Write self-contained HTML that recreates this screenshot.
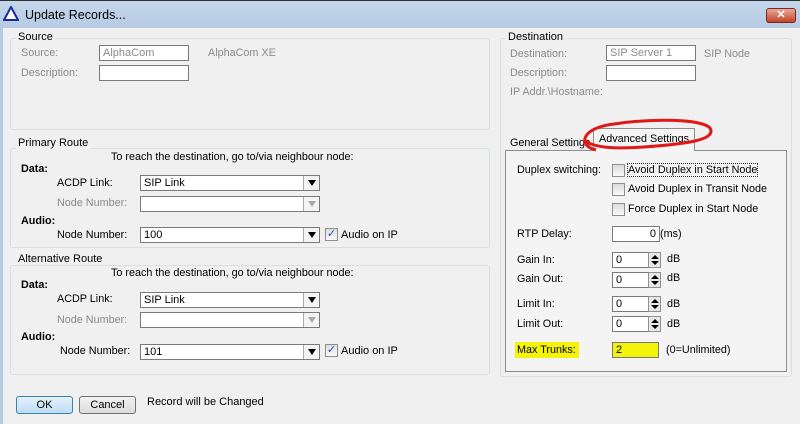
<!DOCTYPE html>
<html><head><style>
*{box-sizing:border-box;margin:0;padding:0}
body{width:800px;height:424px;overflow:hidden;background:#f0f0f0;font-family:"Liberation Sans",sans-serif;font-size:10.8px;color:#000;position:relative}
.a{position:absolute;white-space:nowrap}
.g{color:#8a8a8a}
.grp{position:absolute;border:1px solid #d5dfe5;border-radius:3px}
.gt{position:absolute;background:#f0f0f0;padding:0 2px;font-size:11px}
.in{position:absolute;background:#fff;border:1px solid #7a7a7a;height:16px;padding:1px 3px;font-size:11px}
.cb{position:absolute;background:#fff;border:1px solid #7a7a7a;height:16px;font-size:11px}
.cb span{position:absolute;left:3px;top:1px}
.cb i{position:absolute;right:0;top:0;width:16px;height:14px;border-left:1px solid #aaa;background:#f4f4f4}
.cb i:after{content:"";position:absolute;left:4px;top:4px;border-left:4px solid transparent;border-right:4px solid transparent;border-top:6px solid #000}
.cb.d i:after{border-top-color:#aaa}
.ck{position:absolute;width:13px;height:13px;border:1px solid #8f8f8f;background:linear-gradient(#dcdcdc,#fafafa)}
.sp{position:absolute;width:13px;height:16px;border:1px solid #8f8f8f;background:#e8e8e8}
.sp:before{content:"";position:absolute;left:2px;top:2px;border-left:4px solid transparent;border-right:4px solid transparent;border-bottom:4px solid #000}
.sp:after{content:"";position:absolute;left:2px;top:8px;border-left:4px solid transparent;border-right:4px solid transparent;border-top:4px solid #000}
.btn{position:absolute;height:18px;border:1px solid #707070;border-radius:3px;background:linear-gradient(#f2f2f2,#dcdcdc);text-align:center;line-height:16px;font-size:11px}
b{font-weight:bold}
</style></head><body>
<div class="a" style="left:0;top:0;width:800px;height:28px;background:linear-gradient(#c4d6ea,#b6cbe3);border-top:1px solid #333"></div>
<div class="a" style="left:0;top:28px;width:3px;height:396px;background:#b6cbe3"></div>
<svg class="a" style="left:3px;top:6px" width="16" height="15"><polygon points="8,1 15,14 1,14" fill="#fff" stroke="#1a2a9a" stroke-width="2"/></svg>
<div class="a" style="left:25px;top:8px;font-size:12.5px">Update Records...</div>
<div class="a" style="left:766px;top:8px;width:30px;height:15px;border:1px solid #7a2a1a;border-radius:3px;background:linear-gradient(#e8a898,#c4442a);color:#fff;text-align:center;font-weight:bold;font-size:11px;line-height:13px">✕</div>

<div class="grp" style="left:10px;top:38px;width:480px;height:92px"></div>
<div class="gt" style="left:16px;top:31px">Source</div>
<div class="a g" style="left:21px;top:47px">Source:</div>
<div class="in g" style="left:99px;top:45px;width:90px">AlphaCom</div>
<div class="a g" style="left:208px;top:47px">AlphaCom XE</div>
<div class="a g" style="left:21px;top:67px">Description:</div>
<div class="in" style="left:99px;top:65px;width:90px"></div>

<div class="grp" style="left:10px;top:148px;width:480px;height:100px"></div>
<div class="gt" style="left:16px;top:137px">Primary Route</div>
<div class="a" style="left:111px;top:151px">To reach the destination, go to/via neighbour node:</div>
<div class="a" style="left:21px;top:163px"><b>Data:</b></div>
<div class="a" style="left:57px;top:177px">ACDP Link:</div>
<div class="cb" style="left:140px;top:175px;width:180px"><span>SIP Link</span><i></i></div>
<div class="a g" style="left:57px;top:197px">Node Number:</div>
<div class="cb d" style="left:140px;top:196px;width:180px"><i></i></div>
<div class="a" style="left:21px;top:215px"><b>Audio:</b></div>
<div class="a" style="left:57px;top:229px">Node Number:</div>
<div class="cb" style="left:140px;top:227px;width:180px"><span>100</span><i></i></div>
<div class="ck" style="left:325px;top:228px;color:#2a4ac0;font-size:11px;line-height:11px;text-align:center">✓</div>
<div class="a" style="left:341px;top:229px;font-size:11px">Audio on IP</div>

<div class="grp" style="left:10px;top:265px;width:480px;height:110px"></div>
<div class="gt" style="left:16px;top:253px">Alternative Route</div>
<div class="a" style="left:111px;top:267px">To reach the destination, go to/via neighbour node:</div>
<div class="a" style="left:21px;top:279px"><b>Data:</b></div>
<div class="a" style="left:57px;top:293px">ACDP Link:</div>
<div class="cb" style="left:140px;top:292px;width:180px"><span>SIP Link</span><i></i></div>
<div class="a g" style="left:57px;top:314px">Node Number:</div>
<div class="cb d" style="left:140px;top:312px;width:180px"><i></i></div>
<div class="a" style="left:21px;top:331px"><b>Audio:</b></div>
<div class="a" style="left:60px;top:345px">Node Number:</div>
<div class="cb" style="left:140px;top:344px;width:180px"><span>101</span><i></i></div>
<div class="ck" style="left:325px;top:344px;color:#2a4ac0;font-size:11px;line-height:11px;text-align:center">✓</div>
<div class="a" style="left:341px;top:345px;font-size:11px">Audio on IP</div>

<div class="btn" style="left:16px;top:396px;width:57px;border-color:#3c7fb1;background:linear-gradient(#e6f2fb,#bcdcf4)">OK</div>
<div class="btn" style="left:79px;top:396px;width:57px">Cancel</div>
<div class="a" style="left:147px;top:396px;font-size:11px">Record will be Changed</div>

<div class="grp" style="left:500px;top:38px;width:292px;height:339px"></div>
<div class="gt" style="left:506px;top:31px">Destination</div>
<div class="a g" style="left:510px;top:48px">Destination:</div>
<div class="in g" style="left:606px;top:45px;width:90px">SIP Server 1</div>
<div class="a g" style="left:704px;top:48px">SIP Node</div>
<div class="a g" style="left:510px;top:67px">Description:</div>
<div class="in" style="left:606px;top:65px;width:90px"></div>
<div class="a g" style="left:510px;top:86px">IP Addr.\Hostname:</div>

<div class="a" style="left:505px;top:150px;width:282px;height:222px;border:1px solid #8d8d8d;background:#f4f4f4"></div>
<div class="a" style="left:510px;top:137px">General Settings</div>
<div class="a" style="left:593px;top:128px;width:102px;height:23px;border:1px solid #8d8d8d;border-bottom:none;background:#f4f4f4;padding:4px 0 0 5px">Advanced Settings</div>
<svg class="a" style="left:574px;top:116px" width="142" height="40"><path d="M22,34 C4,30 6,12 40,8 C80,2 128,3 136,12 C143,24 112,28 70,31 C40,33 20,32 10,24" fill="none" stroke="#e01818" stroke-width="3"/></svg>

<div class="a" style="left:517px;top:164px">Duplex switching:</div>
<div class="ck" style="left:612px;top:164px"></div><div class="a" style="left:628px;top:164px;outline:1px dotted #333">Avoid Duplex in Start Node</div>
<div class="ck" style="left:612px;top:183px"></div><div class="a" style="left:628px;top:183px">Avoid Duplex in Transit Node</div>
<div class="ck" style="left:612px;top:203px"></div><div class="a" style="left:628px;top:203px">Force Duplex in Start Node</div>
<div class="a" style="left:517px;top:228px">RTP Delay:</div>
<div class="in" style="left:612px;top:226px;width:48px;text-align:right">0</div>
<div class="a" style="left:660px;top:228px">(ms)</div>
<div class="a" style="left:517px;top:254px">Gain In:</div>
<div class="in" style="left:612px;top:252px;width:37px">0</div><div class="sp" style="left:648px;top:252px"></div><div class="a" style="left:667px;top:253px">dB</div>
<div class="a" style="left:517px;top:273px">Gain Out:</div>
<div class="in" style="left:612px;top:272px;width:37px">0</div><div class="sp" style="left:648px;top:272px"></div><div class="a" style="left:667px;top:272px">dB</div>
<div class="a" style="left:517px;top:298px">Limit In:</div>
<div class="in" style="left:612px;top:296px;width:37px">0</div><div class="sp" style="left:648px;top:296px"></div><div class="a" style="left:667px;top:298px">dB</div>
<div class="a" style="left:517px;top:318px">Limit Out:</div>
<div class="in" style="left:612px;top:316px;width:37px">0</div><div class="sp" style="left:648px;top:316px"></div><div class="a" style="left:667px;top:318px">dB</div>
<div class="a" style="left:515px;top:342px;width:64px;height:16px;background:#f4f40a"></div>
<div class="a" style="left:517px;top:344px">Max Trunks:</div>
<div class="in" style="left:612px;top:342px;width:47px;background:#f4f40a;border-color:#777">2</div>
<div class="a" style="left:666px;top:344px">(0=Unlimited)</div>
</body></html>
